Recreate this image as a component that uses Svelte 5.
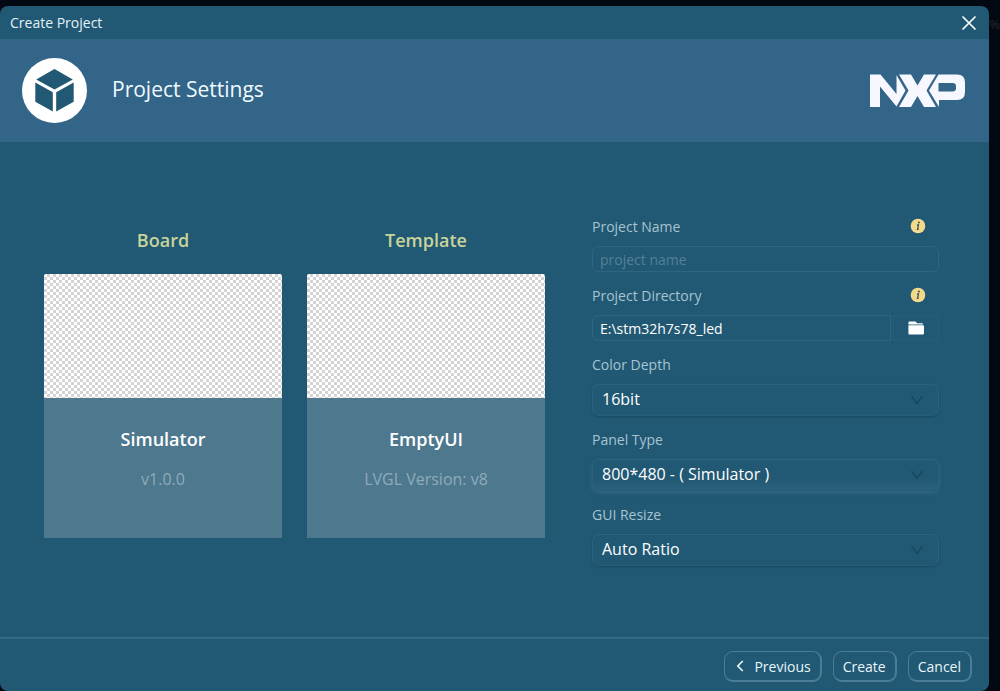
<script lang="ts">
interface Card {
	heading: string;
	title: string;
	detail: string;
}

const cards: Card[] = [
	{ heading: "Board", title: "Simulator", detail: "v1.0.0" },
	{ heading: "Template", title: "EmptyUI", detail: "LVGL Version: v8" },
];

const selects = [
	{ id: "color-depth", label: "Color Depth", options: ["16bit", "32bit"] },
	{ id: "panel-type", label: "Panel Type", options: ["800*480 - ( Simulator )"] },
	{ id: "gui-resize", label: "GUI Resize", options: ["Auto Ratio", "None"] },
];

let projectName = $state("");
let directory = $state("E:\\stm32h7s78_led");
let picked = $state(selects.map((s) => s.options[0]));
</script>

{#snippet info(text: string)}
  <button type="button" class="info" aria-label={text}>
    <svg width="16" height="16" viewBox="0 0 16 16">
      <circle cx="8" cy="8" r="7.3" fill="#f3d98a" />
      <circle cx="8.9" cy="4.5" r="1" fill="#3d5a58" />
      <path d="M7 7h1.5L7.5 11.3h1.3" fill="none" stroke="#3d5a58" stroke-width="1.3" />
    </svg>
  </button>
{/snippet}

<div class="screen">
  <span class="zoom-level" aria-hidden="true">%</span>

  <div class="dialog" role="dialog" aria-label="Create Project">
    <div class="titlebar">
      <span>Create Project</span>
      <button type="button" class="close" aria-label="Close">
        <svg width="16" height="16" viewBox="0 0 16 16"><path d="M2 2l12 12M14 2L2 14" fill="none" stroke="#fff" stroke-width="1.7" stroke-linecap="round" /></svg>
      </button>
    </div>

    <header class="banner">
      <svg class="badge" width="66" height="66" viewBox="0 0 66 66">
        <circle cx="32.5" cy="32.5" r="32.5" fill="#fff" />
        <g fill="#215873">
          <path d="M32.5 11L50.8 21.5 32.5 31.5 14.2 21.5z" />
          <path d="M13.3 24.5L30.8 34.3V53.5L13.3 43.8z" />
          <path d="M51.7 24.5L34.2 34.3V53.5L51.7 43.8z" />
        </g>
      </svg>
      <h1>Project Settings</h1>
      <svg class="logo" width="96" height="34" viewBox="0 0 96 34" role="img" aria-label="NXP">
        <g fill="#f6f7ff">
          <path d="M0 0.5H10.5L26.5 20V1L35.5 16.5 26.5 32.5 10 12.5V33H0z" />
          <path d="M29 0.5H41L47.5 11.5 54 0.5H66L56.5 16.5 66 33H54L47.5 22 41 33H29L38.5 16.5z" />
          <path fill-rule="evenodd" d="M68.5 0.5H87Q95 0.5 95 8.5V18Q95 26 87 26H69V33L59 16.5zM68.5 9V17.5H82.5Q86 17.5 86 14.5V12Q86 9 82.5 9z" />
        </g>
      </svg>
    </header>

    <main class="content">
      {#each cards as card}
        <section class="choice">
          <h2>{card.heading}</h2>
          <button type="button" class="card">
            <span class="preview"></span>
            <span class="card-text">
              <span class="card-title">{card.title}</span>
              <span class="card-detail">{card.detail}</span>
            </span>
          </button>
        </section>
      {/each}

      <form class="settings">
        <div class="field">
          <div class="label-row">
            <label for="project-name">Project Name</label>
            {@render info("About the project name")}
          </div>
          <input id="project-name" type="text" placeholder="project name" bind:value={projectName} />
        </div>

        <div class="field">
          <div class="label-row">
            <label for="directory">Project Directory</label>
            {@render info("About the project directory")}
          </div>
          <div class="path-row">
            <input id="directory" type="text" bind:value={directory} />
            <button type="button" class="browse" aria-label="Browse">
              <svg width="16" height="14" viewBox="0 0 16 14"><path d="M1.5 0.5H7Q8 0.5 8.5 1.5L9 2.3H14Q15 2.3 15 3.4H1Q0.4 3.4 0.4 2.8V1.6Q0.4 0.5 1.5 0.5zM0.4 4.3H15Q16 4.3 16 5.3V12.3Q16 13.5 14.8 13.5H1.5Q0.4 13.5 0.4 12.3z" fill="#fff" /></svg>
            </button>
          </div>
        </div>

        {#each selects as field, i}
          <div class="field">
            <div class="label-row">
              <label for={field.id}>{field.label}</label>
            </div>
            <div class="select-wrap" class:raised={field.id === "panel-type"}>
              <select id={field.id} bind:value={picked[i]}>
                {#each field.options as option}
                  <option>{option}</option>
                {/each}
              </select>
              <svg class="chevron" width="14" height="10" viewBox="0 0 14 10"><path d="M1.5 1L7 8.5 12.5 1" fill="none" stroke="#174862" stroke-width="1.4" /></svg>
            </div>
          </div>
        {/each}
      </form>
    </main>

    <footer class="actions">
      <button type="button">
        <svg width="8" height="12" viewBox="0 0 8 12"><path d="M6.8 1L1.8 6l5 5" fill="none" stroke="currentColor" stroke-width="1.7" /></svg>
        <span>Previous</span>
      </button>
      <button type="button">Create</button>
      <button type="button">Cancel</button>
    </footer>
  </div>
</div>

<style>
  :global(body) {
    margin: 0;
    background: #030912;
  }

  .screen {
    position: relative;
    box-sizing: border-box;
    min-height: 100vh;
    padding: 6px 11px 0 0;
    display: flex;
    overflow: hidden;
    font-family: "Open Sans", "Noto Sans", sans-serif;
    color: #fff;
  }

  .zoom-level {
    position: absolute;
    top: 15px;
    right: 0;
    font-size: 13px;
    line-height: 18px;
    color: #22272d;
  }

  .dialog {
    position: relative;
    flex: 1;
    min-width: 0;
    display: flex;
    flex-direction: column;
    background: #215873;
    border-radius: 8px;
    overflow: hidden;
  }

  button,
  input,
  select {
    font-family: inherit;
    color: inherit;
  }

  button {
    padding: 0;
    border: none;
    background: none;
    cursor: pointer;
  }

  svg {
    display: block;
  }

  .titlebar {
    display: flex;
    align-items: center;
    justify-content: space-between;
    height: 33px;
    padding: 0 12px 0 10px;
    font-size: 14px;
    color: #e4f2f8;
  }

  .banner {
    display: flex;
    align-items: center;
    height: 103px;
    box-sizing: border-box;
    padding: 0 23px 0 22px;
    background: #336589;
  }

  h1 {
    margin: 0 0 4px 24px;
    font-size: 21px;
    font-weight: 400;
    line-height: 28px;
    color: #f0faff;
  }

  .logo {
    margin-left: auto;
  }

  .content {
    flex: 1;
    display: flex;
    align-items: flex-start;
    gap: 25px;
    padding: 74px 50px 40px 44px;
  }

  .choice {
    flex: 238;
    min-width: 0;
  }

  h2 {
    margin: 10px 0 20px;
    font-size: 18px;
    font-weight: 600;
    line-height: 28px;
    text-align: center;
    color: #c9d49b;
  }

  .card {
    display: block;
    width: 100%;
  }

  .preview {
    display: block;
    height: 124px;
    border-radius: 2px 2px 0 0;
    background: repeating-conic-gradient(#d4d4d4 0 25%, #fff 0 50%) 0 0 / 6px 6px;
  }

  .card-text {
    display: flex;
    flex-direction: column;
    gap: 14px;
    padding: 28px 8px 46px;
    background: #4d788d;
  }

  .card-title {
    font-size: 18px;
    font-weight: 600;
    line-height: 26px;
  }

  .card-detail {
    font-size: 16px;
    line-height: 26px;
    color: #8fabbb;
  }

  .settings {
    flex: 347;
    min-width: 0;
    margin-left: 22px;
    display: flex;
    flex-direction: column;
    gap: 13px;
  }

  .field {
    display: flex;
    flex-direction: column;
    gap: 10px;
  }

  .label-row {
    display: flex;
    align-items: center;
    justify-content: space-between;
    height: 20px;
    padding-right: 13px;
    font-size: 14px;
    color: #a6c4d2;
  }

  input {
    box-sizing: border-box;
    width: 100%;
    height: 26px;
    padding: 0 7px;
    font-size: 14px;
    background: none;
    border: 1px solid #2e6580;
    border-radius: 6px;
    outline: none;
  }

  input::placeholder {
    color: #54819a;
    opacity: 1;
  }

  .path-row {
    display: flex;
    gap: 2px;
  }

  .path-row input {
    flex: 1;
    min-width: 0;
    border-radius: 6px 0 0 6px;
  }

  .browse {
    width: 46px;
    display: flex;
    align-items: center;
    justify-content: center;
    border: 1px solid #265d78;
  }

  .select-wrap {
    position: relative;
    border-radius: 7px;
    box-shadow: 0 1px 2px #184861;
  }

  .raised {
    background: linear-gradient(#215873 60%, #2b617d);
    box-shadow: 0 2px 4px #336883;
  }

  select {
    display: block;
    appearance: none;
    box-sizing: border-box;
    width: 100%;
    height: 32px;
    padding: 0 36px 2px 9px;
    font-size: 16px;
    background: none;
    border: 1px solid #2b627d;
    border-bottom-color: #265c77;
    border-radius: 7px;
    outline: none;
  }

  option {
    background: #215873;
  }

  .chevron {
    position: absolute;
    top: 11px;
    right: 15px;
    pointer-events: none;
  }

  .actions {
    display: flex;
    justify-content: flex-end;
    gap: 11px;
    padding: 12px 17px 9px;
    border-top: 2px solid #356b87;
  }

  .actions button {
    display: flex;
    align-items: center;
    gap: 10px;
    height: 31px;
    box-sizing: border-box;
    padding: 0 9px;
    font-size: 14px;
    color: #e8f6fb;
    border: 1px solid #4b7d96;
    border-right-width: 2px;
    border-bottom-width: 2px;
    border-radius: 9px;
  }

  .actions button:first-child {
    padding-left: 11px;
  }
</style>
